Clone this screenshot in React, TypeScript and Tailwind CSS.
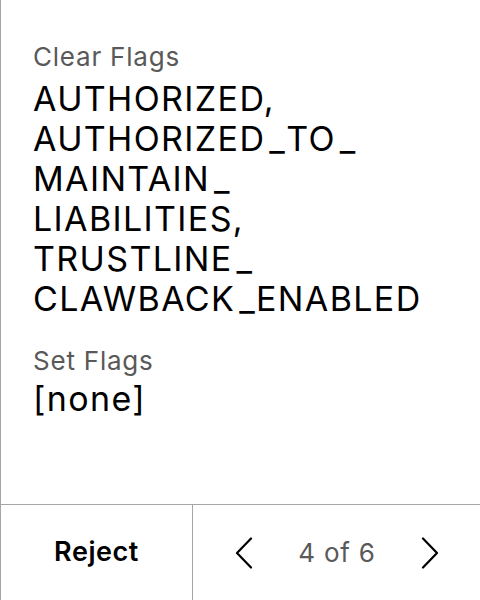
import React from "react";

function Chevron({ dir }: { dir: "left" | "right" }) {
  return (
    <svg width="18" height="32" viewBox="0 0 18 32" fill="none" stroke="#000" strokeWidth="2.2" strokeLinecap="round" strokeLinejoin="round">
      {dir === "left" ? <path d="M16 1.5 L2 16 L16 30.5" /> : <path d="M2 1.5 L16 16 L2 30.5" />}
    </svg>
  );
}

function U() {
  return <span className="pl-[4px]">_</span>;
}

export default function App() {
  return (
    <div className="h-[600px] w-[480px] flex flex-col bg-white border-l border-[#a6a6a6] text-black" style={{ fontFamily: "Inter, 'Noto Sans', sans-serif" }}>
      <div className="flex-1 pl-8 pt-[39px]">
        <div className="text-[26px] leading-[36px] tracking-[0.03em] text-[#595959]">Clear Flags</div>
        <div className="mt-[4px] w-[400px] text-[34px] leading-[40px] tracking-[0.04em]">
          AUTHORIZED, AUTHORIZED<U />
          <wbr />TO<U />
          <wbr />MAINTAIN<U />
          <wbr />LIABILITIES, TRUSTLINE<U />
          <wbr />CLAWBACK<U />
          <wbr />ENABLED
        </div>
        <div className="mt-6 text-[26px] leading-[36px] tracking-[0.03em] text-[#595959]">Set Flags</div>
        <div className="text-[34px] leading-[40px] tracking-[0.04em]">[none]</div>
      </div>
      <div className="h-[96px] flex border-t border-[#a6a6a6]">
        <div className="w-[191px] flex items-center justify-center text-[27px] font-semibold tracking-[0.02em]">Reject</div>
        <div className="flex-1 flex items-center justify-between border-l border-[#a6a6a6] pl-[42px] pr-[41px]">
          <Chevron dir="left" />
          <span className="text-[26px] tracking-[0.03em] text-[#595959]">4 of 6</span>
          <Chevron dir="right" />
        </div>
      </div>
    </div>
  );
}
